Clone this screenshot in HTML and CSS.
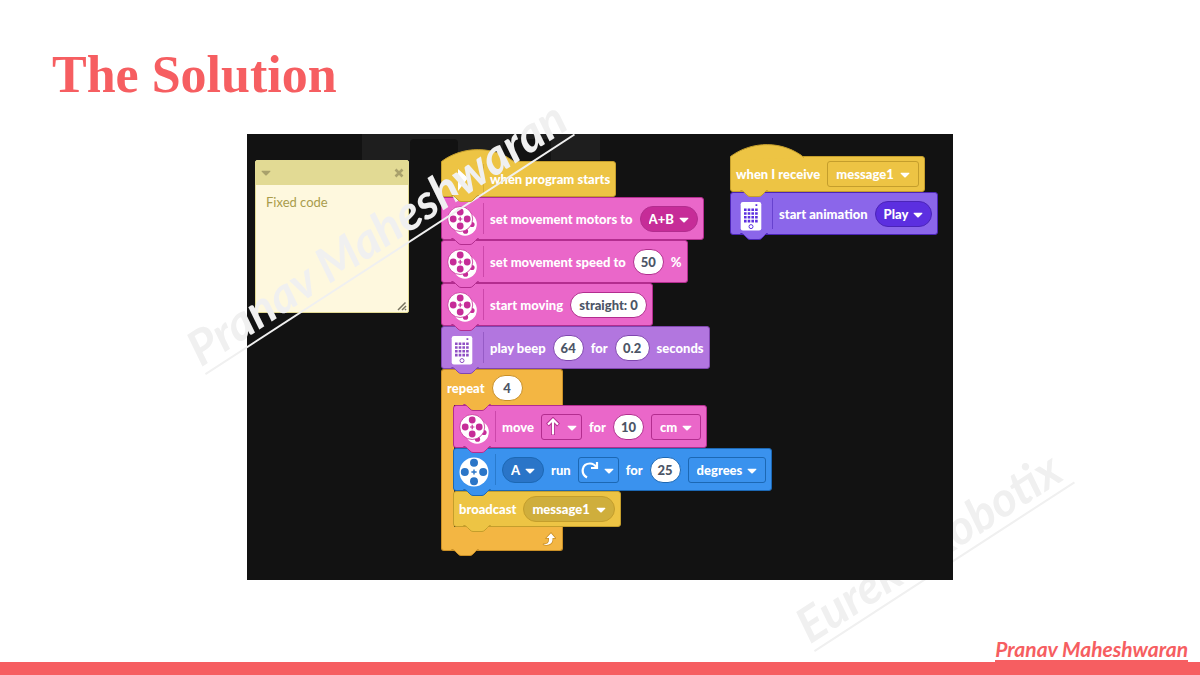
FILE: index.html
```html
<!DOCTYPE html>
<html lang="en">
<head>
<meta charset="utf-8">
<title>The Solution</title>
<link rel="stylesheet" href="styles.css">
</head>
<body>
<svg class="defs" aria-hidden="true">
  <symbol id="motor" viewBox="0 0 30 30">
    <circle cx="15" cy="15" r="14.5" fill="#fff"/>
    <g fill="currentColor"><circle cx="15" cy="5.800" r="4"/><circle cx="15" cy="24.200" r="4"/><circle cx="5.800" cy="15" r="4"/><circle cx="24.200" cy="15" r="4"/></g>
    <path d="M12.4 15h5.2M15 12.4v5.2" stroke="currentColor" stroke-width="1.4"/>
  </symbol>
  <symbol id="motors" viewBox="0 0 30 30">
    <circle cx="18" cy="18" r="11.800" fill="#fff"/>
    <g fill="currentColor"><circle cx="18.500" cy="25.200" r="2.600"/><circle cx="25" cy="18.500" r="2.600"/></g>
    <circle cx="13.200" cy="13" r="12.500" fill="#fff" stroke="currentColor" stroke-width=".8"/>
    <g fill="currentColor"><circle cx="13.200" cy="6" r="3.400"/><circle cx="13.200" cy="20" r="3.400"/><circle cx="6.200" cy="13" r="3.400"/><circle cx="20.200" cy="13" r="3.400"/></g>
    <path d="M11 13h4.400M13.200 10.800v4.400" stroke="currentColor" stroke-width="1.200"/>
  </symbol>
  <symbol id="hub" viewBox="0 0 30 30">
    <rect x="4.7" y="1" width="20.6" height="28.4" rx="2.2" fill="#fff"/>
    <g fill="currentColor">
      <path d="M19.5 3.2h1.8v1.8h-1.8z"/>
      <path d="M8 7.4h2.6v2.6H8zM11.7 7.4h2.6v2.6h-2.6zM15.4 7.4H18v2.6h-2.6zM19.1 7.4h2.6v2.6h-2.6zM8 11.2h2.6v2.6H8zM11.7 11.2h2.6v2.6h-2.6zM15.4 11.2H18v2.6h-2.6zM19.1 11.2h2.6v2.6h-2.6zM8 15h2.6v2.6H8zM11.7 15h2.6v2.6h-2.6zM15.4 15H18v2.6h-2.6zM19.1 15h2.6v2.6h-2.6zM8 18.8h2.6v2.6H8zM11.7 18.8h2.6v2.6h-2.6zM15.4 18.8H18v2.6h-2.6zM19.1 18.8h2.6v2.6h-2.6z"/>
    </g>
    <circle cx="15" cy="25.6" r="2" fill="none" stroke="currentColor" stroke-width="1"/>
  </symbol>
  <symbol id="caret" viewBox="0 0 10 6">
    <path d="M1.2.8h7.6c.6 0 .8.6.4 1L5.7 5.2a1 1 0 0 1-1.4 0L.8 1.8C.4 1.4.6.8 1.2.8z" fill="currentColor"/>
  </symbol>
  <symbol id="tab" viewBox="0 0 28 8">
    <path class="shape" d="M0 0Q2.500.3 4.500 2.500L7 5Q8.500 6.500 10 6.500H19Q20.500 6.500 22 5L24.500 2.500Q26 .3 28 0"/>
  </symbol>
  <symbol id="hat" viewBox="0 0 76 16">
    <path class="shape" d="M.5 16V12.500C22-3.500 53-3.500 74 13.500"/>
  </symbol>
</svg>

<main class="slide">
  <h1 class="title">The Solution</h1>

  <section class="figure">
    <div class="watermark watermark-back">Eureka Robotix</div>

    <div class="workspace">
      <div class="strip"><span class="strip-tab"></span><span class="strip-tab"></span></div>

      <div class="note">
        <div class="note-bar">
          <button class="note-button" type="button" aria-label="Collapse note"><svg class="caret"><use href="#caret"/></svg></button>
          <button class="note-button" type="button" aria-label="Close note"><svg class="cross" viewBox="0 0 10 10"><path d="M1.500 1.500l7 7M8.500 1.500l-7 7"/></svg></button>
        </div>
        <textarea class="note-text" aria-label="Note">Fixed code</textarea>
        <svg class="grip" viewBox="0 0 10 10" aria-hidden="true"><path d="M1 9L8.500 1.500M5 9l4-4M8 9l1-1"/></svg>
      </div>

      <div class="stack stack-main">
        <div class="block small event">
          <svg class="hat"><use href="#hat"/></svg>
          <svg class="icon" viewBox="0 0 30 30"><path d="M11 3l10 9-10 13z" fill="#fff"/></svg>
          <span class="divider"></span>
          <span>when program starts</span>
          <svg class="tab"><use href="#tab"/></svg>
        </div>
        <div class="block move">
          <svg class="icon"><use href="#motors"/></svg>
          <span class="divider"></span>
          <label for="motors-pair">set movement motors to</label>
          <span class="field pill"><select id="motors-pair"><option>A+B</option></select><svg class="caret"><use href="#caret"/></svg></span>
          <svg class="tab"><use href="#tab"/></svg>
        </div>
        <div class="block move">
          <svg class="icon"><use href="#motors"/></svg>
          <span class="divider"></span>
          <label for="speed">set movement speed to</label>
          <input class="value" id="speed" value="50">
          <span>%</span>
          <svg class="tab"><use href="#tab"/></svg>
        </div>
        <div class="block move">
          <svg class="icon"><use href="#motors"/></svg>
          <span class="divider"></span>
          <label for="direction">start moving</label>
          <input class="value value-long" id="direction" value="straight: 0">
          <svg class="tab"><use href="#tab"/></svg>
        </div>
        <div class="block sound">
          <svg class="icon"><use href="#hub"/></svg>
          <span class="divider"></span>
          <label for="note-pitch">play beep</label>
          <input class="value" id="note-pitch" value="64">
          <label for="beep-time">for</label>
          <input class="value value-mid" id="beep-time" value="0.2">
          <span>seconds</span>
          <svg class="tab"><use href="#tab"/></svg>
        </div>
        <div class="loop control">
          <div class="block small loop-head">
            <label for="times">repeat</label>
            <input class="value" id="times" value="4">
          </div>
          <div class="loop-body">
            <div class="block move">
              <svg class="notch" viewBox="0 0 28 8"><use href="#tab"/></svg>
              <svg class="icon"><use href="#motors"/></svg>
              <span class="divider"></span>
              <span>move</span>
              <button class="field box icon-field" type="button" aria-label="Direction: forward" aria-haspopup="listbox">
                <svg class="glyph" viewBox="0 0 18 20"><path class="under" d="M9 18V3M3.500 8L9 2.500 14.500 8"/><path class="over" d="M9 17.500V3M4 7.500l5-5 5 5"/></svg>
                <svg class="caret"><use href="#caret"/></svg>
              </button>
              <label for="distance">for</label>
              <input class="value" id="distance" value="10">
              <span class="field box"><select aria-label="Distance unit"><option>cm</option></select><svg class="caret"><use href="#caret"/></svg></span>
              <svg class="tab"><use href="#tab"/></svg>
            </div>
            <div class="block motor">
              <svg class="icon"><use href="#motor"/></svg>
              <span class="divider"></span>
              <span class="field pill"><select id="port" aria-label="Port"><option>A</option></select><svg class="caret"><use href="#caret"/></svg></span>
              <label for="port">run</label>
              <button class="field box icon-field" type="button" aria-label="Turn: clockwise" aria-haspopup="listbox">
                <svg class="glyph" viewBox="0 0 18 20"><path class="over" d="M6 17.500C-1 13.500 1 3.500 9 3.500c3 0 5 1.500 6.500 4M16 2v6h-6"/></svg>
                <svg class="caret"><use href="#caret"/></svg>
              </button>
              <label for="angle">for</label>
              <input class="value" id="angle" value="25">
              <span class="field box"><select aria-label="Angle unit"><option>degrees</option></select><svg class="caret"><use href="#caret"/></svg></span>
              <svg class="tab"><use href="#tab"/></svg>
            </div>
            <div class="block small event">
              <label for="send">broadcast</label>
              <span class="field pill message"><select id="send"><option>message1</option></select><svg class="caret"><use href="#caret"/></svg></span>
              <svg class="tab"><use href="#tab"/></svg>
            </div>
          </div>
          <div class="loop-foot">
            <svg class="repeat-icon" viewBox="0 0 14 14"><path class="under" d="M1 12.300C5 12.500 7 11 7 7.500V6H4.500L9 1.200 13 6h-2.500v1.500C10.500 12 6 14 1 12.300z"/><path d="M1 12.300C5 12.500 7 11 7 7.500V6H4.500L9 1.200 13 6h-2.500v1.500C10.500 12 6 14 1 12.300z" fill="#fff"/></svg>
            <svg class="tab"><use href="#tab"/></svg>
          </div>
        </div>
      </div>

      <div class="stack stack-side">
        <div class="block small event">
          <svg class="hat"><use href="#hat"/></svg>
          <label for="receive">when I receive</label>
          <span class="field box message"><select id="receive"><option>message1</option></select><svg class="caret"><use href="#caret"/></svg></span>
          <svg class="tab"><use href="#tab"/></svg>
        </div>
        <div class="block display">
          <svg class="icon"><use href="#hub"/></svg>
          <span class="divider"></span>
          <label for="animation">start animation</label>
          <span class="field pill"><select id="animation"><option>Play</option></select><svg class="caret"><use href="#caret"/></svg></span>
          <svg class="tab"><use href="#tab"/></svg>
        </div>
      </div>
    </div>

    <div class="watermark watermark-front">Pranav Maheshwaran</div>
  </section>

  <footer class="footer"><span class="signature">Pranav Maheshwaran</span></footer>
</main>
</body>
</html>
```

FILE: styles.css
```css
* { box-sizing: border-box; }

body {
  margin: 0;
  background: #fff;
  font-family: Lato, "Open Sans", sans-serif;
}

.defs { position: absolute; width: 0; height: 0; }

.slide {
  display: flex;
  flex-direction: column;
  min-height: 100vh;
  overflow: hidden;
}

.title {
  margin: 0;
  padding: 45px 52px 29px;
  color: #f65e61;
  font: bold 52px/60px "Liberation Serif", serif;
}

.figure {
  position: relative;
  isolation: isolate;
  width: 100%;
  max-width: 706px;
  margin: 0 auto;
}

.workspace {
  position: relative;
  display: grid;
  grid-template-columns: 186px 289px 1fr;
  align-items: start;
  padding: 0 8px 29px;
  background: #121212;
}

/* Toolbar seen behind the blocks */
.strip {
  position: absolute;
  top: 0;
  left: 115px;
  display: flex;
  justify-content: space-between;
  width: 238px;
  height: 26px;
  padding: 5px 49px 0 48px;
  background: #1e1e1e;
}
.strip-tab { width: 48px; background: #121212; border-radius: 4px 4px 0 0; }

/* Sticky note */
.note {
  position: relative;
  width: 154px;
  height: 153px;
  margin-top: 26px;
  display: flex;
  flex-direction: column;
  border: 1px solid #e2da94;
  border-radius: 2px;
  background: #fef8de;
}
.note-bar {
  display: flex;
  justify-content: space-between;
  align-items: center;
  height: 24px;
  padding: 0 4px 0 5px;
  background: #e2da94;
  color: #a9a16c;
}
.note-button { display: flex; padding: 0; border: 0; background: none; color: inherit; }
.cross { width: 10px; height: 10px; fill: none; stroke: currentColor; stroke-width: 2.6; }
.note-text {
  flex: 1;
  padding: 9px 10px;
  border: 0;
  resize: none;
  background: none;
  color: #a99c4c;
  font: 13px/16px Lato, sans-serif;
}
.grip {
  position: absolute;
  right: 1px;
  bottom: 1px;
  width: 10px;
  height: 10px;
  fill: none;
  stroke: #77735f;
  stroke-width: 1.5;
}

/* Blocks */
.stack { display: flex; flex-direction: column; align-items: flex-start; }
.stack-main { padding-top: 27px; }
.stack-side { padding-top: 22px; }

.event { --fill: #edc444; --edge: #c49e2c; --deep: #cfae3c; }
.move { --fill: #ea67c9; --edge: #b32d8f; --deep: #c62c98; }
.sound { --fill: #b276df; --edge: #8046b0; --deep: #8f4fc4; }
.control { --fill: #f3b643; --edge: #c98f26; --deep: #c98f26; }
.motor { --fill: #3a92ee; --edge: #1c68b4; --deep: #2a75c8; }
.display { --fill: #8b66ea; --edge: #4b24b8; --deep: #5c2fe0; }

.block {
  position: relative;
  display: flex;
  align-items: center;
  gap: 7px;
  width: max-content;
  height: 43px;
  padding: 0 5px;
  border: 1px solid var(--edge);
  border-radius: 3px;
  background: var(--fill);
  color: #fff;
  font: 900 13px/16px Lato, sans-serif;
  white-space: nowrap;
}
.small { height: 36px; }

.tab, .notch {
  position: absolute;
  z-index: 2;
  top: calc(100% - 1px);
  left: 9px;
  width: 28px;
  height: 8px;
}
.notch { top: -2px; --fill: #f3b643; }
.hat {
  position: absolute;
  top: -13px;
  left: -1px;
  width: 76px;
  height: 16px;
}
.shape { fill: var(--fill); stroke: var(--edge); }

.icon { width: 30px; height: 30px; margin-top: 4px; color: var(--deep); }
.divider { width: 1px; height: 31px; margin: 0 -1px; background: var(--edge); opacity: .55; }

.field {
  position: relative;
  display: flex;
  align-items: center;
  height: 26px;
  border: 1px solid var(--edge);
  background: none;
  color: #fff;
}
.pill { border-radius: 13px; background: var(--deep); }
.box { border-radius: 3px; }
.field select {
  appearance: none;
  height: 24px;
  margin: 0;
  padding: 0 22px 0 8px;
  border: 0;
  background: none;
  color: #fff;
  font: inherit;
}
.caret { width: 10px; height: 6px; }
.field .caret { position: absolute; right: 8px; top: 10px; pointer-events: none; }
.message select { padding-right: 24px; }

.icon-field { width: 41px; padding: 0 2px; }
.icon-field .caret { right: 4px; }
.glyph { width: 18px; height: 20px; fill: none; }
.over { stroke: #fff; stroke-width: 2.2; }
.under { stroke: var(--edge); stroke-width: 4; fill: none; }

.value {
  width: 31px;
  height: 26px;
  padding: 0;
  border: 1px solid var(--edge);
  border-radius: 13px;
  background: #fff;
  color: #4c5566;
  font: inherit;
  text-align: center;
}
.value-mid { width: 35px; }
.value-long { width: 77px; }

/* Repeat loop: an arm on the left, with the inner blocks beside it */
.loop { position: relative; }
.loop-head { width: 122px; border-bottom: 0; border-radius: 3px 3px 0 0; }
.loop-body {
  padding-left: 11px;
  border-left: 1px solid var(--edge);
  background: linear-gradient(var(--fill), var(--fill)) left / 12px 100% no-repeat;
}
.loop-foot {
  position: relative;
  display: flex;
  justify-content: flex-end;
  align-items: center;
  width: 122px;
  height: 24px;
  padding-right: 6px;
  border: 1px solid var(--edge);
  border-top: 0;
  border-radius: 0 0 3px 3px;
  background: var(--fill);
}
.repeat-icon { width: 14px; height: 14px; }
.repeat-icon .under { stroke-width: 1.5; }

/* Handwritten names */
.watermark {
  position: absolute;
  border-bottom: 2px solid #f0f0f0;
  color: #f0f0f0;
  font: italic bold 48px/50px Lato, sans-serif;
  white-space: nowrap;
  transform: rotate(-33deg);
  transform-origin: left bottom;
}
.watermark-front { left: -41px; bottom: 205px; width: 440px; }
.watermark-back { left: 568px; bottom: -72px; width: 310px; z-index: -1; }

.footer {
  display: flex;
  justify-content: flex-end;
  margin-top: auto;
  padding-right: 12px;
  border-bottom: 13px solid #f65e61;
}
.signature {
  border-bottom: 2px solid #f65e61;
  color: #f65e61;
  font: italic bold 21px/22px Lato, sans-serif;
}
```
